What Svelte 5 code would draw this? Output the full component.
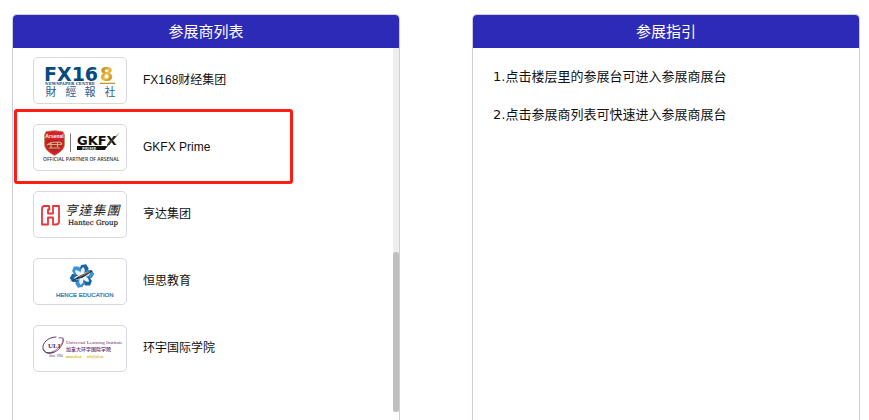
<script>
  const exhibitors = [
    { id: 'fx168', name: 'FX168财经集团' },
    { id: 'gkfx', name: 'GKFX Prime', marked: true },
    { id: 'hantec', name: '亨达集团' },
    { id: 'hence', name: '恒思教育' },
    { id: 'uli', name: '环宇国际学院' },
  ];
  const guide = ['1.点击楼层里的参展台可进入参展商展台', '2.点击参展商列表可快速进入参展商展台'];
  const petals = [15, 75, 135, 195, 255, 315];
</script>

<main class="page">
  <section class="panel">
    <h2 class="title">参展商列表</h2>
    <div class="scroller">
      <ul class="list">
        {#each exhibitors as item (item.id)}
          <li class="item" class:marked={item.marked}>
            <a class="link" href="#{item.id}">
              <span class="card">
                <svg class="logo" viewBox="0 0 92 45" aria-hidden="true">
                  {#if item.id === 'fx168'}
                    <defs>
                      <linearGradient id="gold" x1="0" y1="0" x2="1" y2="1">
                        <stop offset="0" stop-color="#8f6510" />
                        <stop offset="0.5" stop-color="#edbd3c" />
                        <stop offset="1" stop-color="#b07a12" />
                      </linearGradient>
                    </defs>
                    <g font-family="DejaVu Sans" font-weight="700" font-size="19">
                      <text x="10" y="23" fill="#074a80">FX16</text>
                      <text x="66" y="23" fill="url(#gold)">8</text>
                    </g>
                    <text x="11" y="27" font-family="DejaVu Serif" font-weight="700" font-size="4" fill="#1b4c78">NEWSPAPER CENTRE</text>
                    <path d="M66 25.4H81" stroke="#c8922a" stroke-width="1.4" />
                    <g font-family="Noto Sans CJK TC" font-size="11" text-anchor="middle" fill="#2c6090">
                      <text x="17" y="38">財</text>
                      <text x="37" y="38">經</text>
                      <text x="56" y="38">報</text>
                      <text x="76" y="38">社</text>
                    </g>
                  {:else if item.id === 'gkfx'}
                    <path d="M12 6.5Q20.500 4.800 29 6.500L30.500 10V19C30.500 25 25 28 20.500 30.500C16 28 10.500 25 10.500 19V10Z" fill="#d91e25" stroke="#a99660" stroke-width="0.8" />
                    <path d="M13 15V19C13 23 16.500 26 20.500 28C24.500 26 28 23 28 19V15Z" fill="#b4232b" />
                    <path d="M13 20L17 17.500L26 17L28 19M15 23H26M17 18V23M23.500 17V22M13.500 19.500H28" fill="none" stroke="#d4b176" stroke-width="1.2" />
                    <text x="20.500" y="13" font-family="Liberation Sans" font-weight="700" font-size="5" text-anchor="middle" fill="#fff">Arsenal</text>
                    <path d="M36.500 8.500V27" stroke="#555" stroke-width="0.8" />
                    <text x="43" y="20" font-family="DejaVu Sans" font-weight="700" font-size="13" fill="#111">GKFX</text>
                    <path d="M86 7.500L77.500 17L71 24.500L75 17Z" fill="#444" />
                    <path d="M43 21H73L71 25H43Z" fill="#111" />
                    <text x="48" y="24.500" font-family="DejaVu Sans" font-weight="700" font-size="4" fill="#ddd">PRIME</text>
                    <text x="9" y="36" font-family="Open Sans" font-weight="600" font-size="5" fill="#333">OFFICIAL PARTNER OF ARSENAL</text>
                  {:else if item.id === 'hantec'}
                    <g fill="none" stroke="#e8353b" stroke-width="1.800" stroke-linejoin="round">
                      <path d="M15 14H10.500Q8 14 8 17V32.500H14V25.500H19V29.500V32.500H22Q25 32.500 25 29.500V14H19V21.500H14V17.500H15.500Z" />
                    </g>
                    <g font-family="Noto Sans CJK TC" font-size="13" text-anchor="middle" fill="#222" font-style="italic">
                      <text x="37" y="23">亨</text>
                      <text x="51" y="23">達</text>
                      <text x="65" y="23">集</text>
                      <text x="79" y="23">團</text>
                    </g>
                    <text x="34" y="33" font-family="DejaVu Serif" font-size="7" fill="#222" stroke="#222" stroke-width="0.2">Hantec Group</text>
                  {:else if item.id === 'hence'}
                    <g transform="translate(48 17)">
                      {#each petals as angle, i}
                        <g transform="rotate({angle})">
                          <path d="M0 -3L-4.500 -6L-3.500 -10.500L1 -12.500L4.500 -9L4 -5Z" fill={i % 2 ? '#3d91cc' : '#1b64a5'} />
                          <path d="M-0.500 -2Q-4.500 -5 -1 -9Q3 -6 0.500 -2Z" fill="#e9f4fb" />
                        </g>
                      {/each}
                      <path d="M-12 5.500L-2 -0.500L9 -5.500L11 -5L1 1.500Z" fill="#27313b" />
                      <path d="M-3 1L8 -4.500" stroke="#c59a72" stroke-width="0.8" />
                    </g>
                    <text x="22" y="38" font-family="Liberation Sans" font-size="6" fill="#2372ab" stroke="#2372ab" stroke-width="0.200">HENCE EDUCATION</text>
                  {:else}
                    <g fill="none" stroke="#65306f" stroke-linecap="round">
                      <path d="M22 11C14 11 8 17 9 23C10 27 15 28 20 26" stroke-width="1" />
                      <path d="M10 24C12 29 20 28 25 23C31 16 31 10 25 12" stroke-width="0.8" />
                      <path d="M13 27C22 27 30 18 29 12" stroke-width="0.6" />
                    </g>
                    <text x="14" y="22" font-family="Liberation Serif" font-weight="700" font-size="7" fill="#592564">ULI</text>
                    <text x="15" y="31" font-family="Liberation Serif" font-size="3" fill="#592564">Since 1994</text>
                    <text x="32" y="18" font-family="Liberation Serif" font-size="5" fill="#65306f">Universal Learning Institute</text>
                    <text x="32" y="25" font-family="Noto Sans CJK SC" font-weight="500" font-size="5" fill="#65306f">加拿大环宇国际学院</text>
                    <g font-family="Liberation Sans" font-weight="700" font-size="3" fill="#d9b400">
                      <text x="32" y="32">www.uli.ca</text>
                      <text x="53" y="32">info@uli.ca</text>
                    </g>
                  {/if}
                </svg>
              </span>
              <span class="name">{item.name}</span>
            </a>
          </li>
        {/each}
      </ul>
      <div class="track"><div class="thumb"></div></div>
    </div>
  </section>

  <section class="panel">
    <h2 class="title">参展指引</h2>
    <div class="guide">
      {#each guide as line}
        <p>{line}</p>
      {/each}
    </div>
  </section>
</main>

<style>
  :global(body) {
    margin: 0;
    background: #fff;
  }
  .page {
    box-sizing: border-box;
    min-height: 100vh;
    padding: 14px 9px 0 12px;
    display: grid;
    grid-template-columns: 1fr 1fr;
    gap: 72px;
    font-family: 'Liberation Sans', 'Noto Sans CJK SC', sans-serif;
    color: #111;
  }
  .panel {
    border: 1px solid #cecddd;
    border-bottom: 0;
    border-radius: 5px 5px 0 0;
    overflow: hidden;
  }
  .title {
    margin: 0;
    background: #2e2ab8;
    color: #fff;
    font-size: 15px;
    line-height: 33px;
    font-weight: 400;
    text-align: center;
  }
  .scroller {
    display: flex;
    height: 364px;
  }
  .list {
    flex: 1;
    margin: 0;
    padding: 9px 0 0 20px;
    list-style: none;
    display: flex;
    flex-direction: column;
    gap: 20px;
  }
  .item {
    position: relative;
  }
  .marked::after {
    content: '';
    position: absolute;
    top: -15px;
    bottom: -13px;
    left: -19px;
    width: 273px;
    border: 3px solid #fd1d14;
    border-radius: 3px;
    pointer-events: none;
  }
  .link {
    display: flex;
    align-items: center;
    gap: 16px;
    color: inherit;
    text-decoration: none;
  }
  .card {
    width: 92px;
    height: 45px;
    border: 1px solid #d8d8e0;
    border-radius: 5px;
    background: #fff;
  }
  .logo {
    display: block;
    width: 100%;
    height: 100%;
  }
  .name {
    padding-bottom: 2px;
    font-size: 12px;
    line-height: 18px;
  }
  .track {
    width: 6px;
    display: flex;
    flex-direction: column;
    justify-content: flex-end;
    background: #eee;
  }
  .thumb {
    height: 160px;
    border-radius: 3px;
    background: #bfbfbf;
  }
  .guide {
    padding: 10px 20px;
    font-family: 'DejaVu Sans', 'Noto Sans CJK SC', sans-serif;
    font-size: 13px;
    line-height: 38px;
  }
  .guide p {
    margin: 0;
  }
</style>
